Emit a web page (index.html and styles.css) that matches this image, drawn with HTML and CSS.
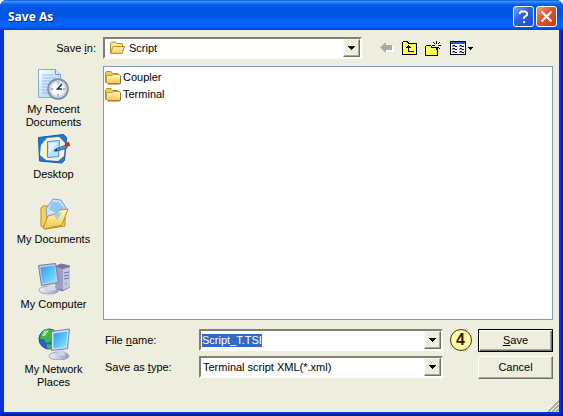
FILE: index.html
```html
<!DOCTYPE html>
<html lang="en">
<head>
<meta charset="utf-8">
<title>Save As</title>
<link rel="stylesheet" href="styles.css">
</head>
<body>
<svg class="defs" aria-hidden="true">
  <defs>
    <linearGradient id="gold" x1="0" y1="0" x2="0" y2="1"><stop offset="0" stop-color="#fffbd0"/><stop offset="1" stop-color="#f1c64c"/></linearGradient>
    <linearGradient id="paper" x1="0" y1="0" x2="1" y2="1"><stop offset="0" stop-color="#ffffff"/><stop offset="1" stop-color="#9cc8f5"/></linearGradient>
    <linearGradient id="screen" x1="0" y1="0" x2="1" y2="1"><stop offset="0" stop-color="#279cf0"/><stop offset="1" stop-color="#8beaff"/></linearGradient>
    <linearGradient id="metal" x1="0" y1="0" x2="1" y2="0"><stop offset="0" stop-color="#f4f5ff"/><stop offset="1" stop-color="#9698be"/></linearGradient>
    <symbol id="folder" viewBox="0 0 16 16">
      <path d="M.5 12.500v-10l1-1h4.500l1.500 2h5.500l1 1.500v7.500z" fill="#f0cb55" stroke="#b88a20"/>
      <path d="M1.500 5.500h6l1-1h5.500l1.500 1v7l-1 1H2.500l-1-1z" fill="url(#gold)" stroke="#c49a28"/>
      <path d="M15.500 6v7l-1 1H3" fill="none" stroke="#8c6d20"/>
    </symbol>
    <symbol id="folder-open" viewBox="0 0 16 16">
      <path d="M1.500 12.500v-9l1-1.500h4l1.500 1.500h5l.5 1V12z" fill="#ffe78a" stroke="#b98d25"/>
      <path d="M1.500 13.500 4 6.500h11.500l-2.500 7z" fill="url(#gold)" stroke="#bd8e20"/>
    </symbol>
    <symbol id="arrow" viewBox="0 0 7 4"><path d="M0 0h7v1H6v1H5v1H4v1H3V3H2V2H1V1H0z"/></symbol>
  </defs>
</svg>

<main class="dialog">
  <header class="titlebar">
    <h1>Save As</h1>
    <button class="caption-btn help" type="button" aria-label="Help">
      <svg viewBox="0 0 19 19"><path d="M6 7V6l1-1.500h4.500L13 6v2l-3 2.500V12M10 14v2" fill="none" stroke="#fff" stroke-width="2"/></svg>
    </button>
    <button class="caption-btn close" type="button" aria-label="Close">
      <svg viewBox="0 0 19 19"><path d="m4.500 4.500 10 10M14.500 4.500l-10 10" fill="none" stroke="#fff" stroke-width="2.200"/></svg>
    </button>
  </header>

  <form class="content">
    <label class="lookin-label" for="lookin">Save <u>i</u>n:</label>
    <div class="topbar">
      <div class="combo">
        <svg class="icon16" aria-hidden="true"><use href="#folder-open"/></svg>
        <select id="lookin"><option>Script</option></select>
        <span class="drop"><svg><use href="#arrow"/></svg></span>
      </div>
      <div class="tools">
        <button type="button" aria-label="Back" disabled>
          <svg width="14" height="12"><path d="M7 2v3h7v5H7v2L1 6z" fill="#fff"/><path d="M0 5.500 6 0v3h6v5H6v3z" fill="#aaa99c"/></svg>
        </button>
        <button type="button" aria-label="Up one level">
          <svg width="15" height="14" shape-rendering="crispEdges"><path d="M.5 13.500v-12l1-1h4l1 2h8v11z" fill="#ffff58" stroke="#000"/><path d="M6 4h1v1h1v1h1v1H7v3h5v1H6V7H4V6h1V5h1z"/></svg>
        </button>
        <button type="button" aria-label="Create new folder">
          <svg width="17" height="15" shape-rendering="crispEdges"><path d="M1 5h5v2h6v8H1z" fill="#ffff58"/><path d="M1 4h5v1H1zM0 5h1v9H0zM6 5h1v1h5v1H6zM12 6h1v8h-1zM0 14h13v1H0z"/><path d="M11 0h1v3h-1zM11 6h1v3h-1zM7 4h3v1H7zM13 4h3v1h-3zM8 1h1v1H8zM9 2h1v1H9zM14 1h1v1h-1zM13 2h1v1h-1zM13 6h1v1h-1zM14 7h1v1h-1zM9 6h1v1H9z"/></svg>
        </button>
        <button type="button" aria-label="View menu">
          <svg width="23" height="14" shape-rendering="crispEdges"><path d="M.5.5h15v13H.5z" fill="#fff" stroke="#000"/><path d="M1 1h14v2H1z" fill="#1763bd"/><path d="M2 4h3v2H2zM9 4h3v2H9zM2 7h3v2H2zM9 7h3v2H9zM2 10h3v2H2zM9 10h3v2H9z" fill="#9898bd"/><path d="M3 4h2v1H3zM10 4h2v1h-2zM3 7h2v1H3zM10 7h2v1h-2zM3 10h2v1H3zM10 10h2v1h-2z" fill="#00007c"/><path d="M5 5h2v1H5zM12 5h2v1h-2zM5 8h2v1H5zM12 8h2v1h-2zM5 11h2v1H5zM12 11h2v1h-2zM18 6h5v1h-1v1h-1v1h-1V8h-1V7h-1z"/></svg>
        </button>
      </div>
    </div>

    <nav class="places">
      <a href="#recent">
        <svg viewBox="0 0 32 32" aria-hidden="true"><path d="M.5 1.500h17l5 5v23H.5z" fill="url(#paper)" stroke="#86a9df"/><path d="M17.500 1.500v5h5" fill="#d7eaff" stroke="#7098d3"/><path d="M4 7h11M4 10h14M4 13h10M4 16h7M4 19h6M4 22h6M4 25h7" stroke="#8fbcf3"/><circle cx="20" cy="21" r="9.800" fill="#e3edf7" stroke="#8190a4" stroke-width="2"/><circle cx="20" cy="21" r="7.600" fill="#f5faff" stroke="#b0cdea"/><path d="M20 14v2M20 26v2M13 21h2M25 21h2" stroke="#ef9342" stroke-width="1.500"/><path d="m24 16-4.500 5H24" fill="none" stroke="#18365b" stroke-width="1.500"/></svg>
        My Recent<br>Documents
      </a>
      <a href="#desktop">
        <svg viewBox="0 0 32 32" aria-hidden="true"><path d="m.5 4.500 25-3 3 3-2 23-3 2.500-22-2z" fill="#2b78d0" stroke="#1456a9" stroke-linejoin="round"/><path d="m3 12 6-7 12-1 6 6-1 13-6 5-12-1-6-5z" fill="#fff2c9"/><path d="m9.500 8.500 12-1-1 16-11 1z" fill="#b9e2ff" stroke="#3896e4"/><path d="m11 10 8 0-8 11z" fill="#e3f5ff"/><path d="m18 16 10-4 1 3-10 3-3 0z" fill="#4c9ee5" stroke="#315b8e"/><path d="m27 10 4-1 1 4-4 1z" fill="#c52b19"/><path d="m16 17 3-1v2z" fill="#052445"/></svg>
        Desktop
      </a>
      <a href="#documents">
        <svg viewBox="0 0 32 32" aria-hidden="true"><path d="M3 28V10l2-2h5l2 3 15 2v15l-20 3z" fill="#f8d15c" stroke="#bd8a1b"/><path d="m8 11 7-10 8 1 5 8-9 16-10-5z" fill="#c6e3ff" stroke="#6c9ed5"/><path d="m14 4 7 0 5 6-5 7-10-6z" fill="#92c6f7"/><path d="m5 30 5-12 7-2 5-4 8-1-6 16-17 4z" fill="url(#gold)" stroke="#c38d18" stroke-linejoin="round"/><path d="m16 16 8-2-5 8z" fill="#8fd2f1"/></svg>
        My Documents
      </a>
      <a href="#computer">
        <svg viewBox="0 0 32 32" aria-hidden="true"><path d="m18 3 5-2 9 2v21l-8 4-6-3z" fill="#7476a3" stroke="#777799"/><path d="m18 4 7 2v21l-7-3z" fill="#9a9fc8"/><path d="m25 6 7-2v20l-7 3z" fill="#c4c6e2"/><path d="m26 10 5-1m-5 4 5-1m-5 4 5-1" stroke="#7678a0"/><path d="m27 20 2-.5v2l-2 .5z" fill="#65d47d"/><ellipse cx="11" cy="27" rx="10" ry="4" fill="url(#metal)" stroke="#a1a2c2"/><path d="m9 20 7 1 2 6-8 1z" fill="#d8d9ed"/><path d="m.5 2.500 17-2 3 19-17 3z" fill="#c6c8dc" stroke="#7779a2"/><path d="m2.500 4.500 14-2 2 15-14 3z" fill="url(#screen)"/></svg>
        My Computer
      </a>
      <a href="#network">
        <svg viewBox="0 0 32 32" aria-hidden="true"><circle cx="11" cy="11" r="10" fill="#1e66c7" stroke="#184b9c"/><path d="M3 5 8 1l7 1 2 4-3 2-2 6-4 1-2-4-4 0zM9 16l5 1-2 4-3-1z" fill="#42b64c"/><path d="m6 3 5-1-4 6-3 0z" fill="#a4e591"/><ellipse cx="21" cy="28" rx="10" ry="4" fill="url(#metal)" stroke="#9fa1bf"/><path d="m20 20 6 0 1 8-8-1z" fill="#cfd1e6"/><path d="m13.500 3.500 18-2.500-2 19.500-16 2z" fill="#d1dcea" stroke="#7284aa"/><path d="m15.500 5.500 14-2-1.500 15-12.500 2z" fill="url(#screen)"/></svg>
        My Network<br>Places
      </a>
    </nav>

    <section class="main">
      <ul class="files">
        <li><svg class="icon16" aria-hidden="true"><use href="#folder"/></svg>Coupler</li>
        <li><svg class="icon16" aria-hidden="true"><use href="#folder"/></svg>Terminal</li>
      </ul>
      <div class="fields">
        <label for="filename">File <u>n</u>ame:</label>
        <div class="combo">
          <input id="filename" type="text" value="Script_T.TSI" spellcheck="false" autocomplete="off">
          <span class="drop"><svg><use href="#arrow"/></svg></span>
        </div>
        <span class="step">4</span>
        <button class="btn default" type="submit"><span><u>S</u>ave</span></button>
        <label for="filetype">Save as <u>t</u>ype:</label>
        <div class="combo">
          <select id="filetype"><option>Terminal script XML(*.xml)</option></select>
          <span class="drop"><svg><use href="#arrow"/></svg></span>
        </div>
        <button class="btn cancel" type="button">Cancel</button>
      </div>
    </section>
    <svg class="grip" aria-hidden="true"><path d="m1 12 11-11M5 12l7-7M9 12l3-3" stroke="#aaa99b" stroke-width="2"/><path d="m0 11 11-11M4 11l8-8M8 11l4-4" stroke="#fff"/></svg>
  </form>
</main>
<script src="script.js"></script>
</body>
</html>
```

FILE: styles.css
```css
* { box-sizing: border-box; }

body {
  margin: 0;
  background: #f4f4ea;
  font: 11px/13px "Liberation Sans", Arial, sans-serif;
  color: #000;
}

.defs { position: absolute; width: 0; height: 0; }

button, input, select { font: inherit; color: inherit; }

.dialog {
  display: flex;
  flex-direction: column;
  min-height: 100vh;
  border-radius: 7px 7px 0 0;
  background: #0831d9;
  box-shadow: inset 1px 0 #0831d9, inset -2px 0 #001ea0, inset 0 -2px #001ea0;
  overflow: hidden;
}

.titlebar {
  display: flex;
  align-items: center;
  gap: 2px;
  height: 30px;
  padding: 3px 6px 0 8px;
  background: linear-gradient(#0058e0 0, #3b92ff 5%, #0862e8 14%, #0054e3 28%, #0055e5 55%, #0065ff 78%, #0062f8 90%, #0041c6 100%);
}

.titlebar h1 {
  flex: 1;
  margin: 0;
  font: bold 12px/16px "Noto Sans", sans-serif;
  color: #fff;
  text-shadow: 1px 1px #0a1e80;
}

.caption-btn {
  width: 21px;
  height: 21px;
  padding: 0;
  border: 1px solid #fff;
  border-radius: 3px;
}
.caption-btn svg { display: block; width: 19px; height: 19px; }
.help { background: linear-gradient(135deg, #7ea3f5, #2b5fe0 45%, #1c4fd0); }
.close { background: linear-gradient(135deg, #f0a080, #e0522c 45%, #c63a12); }

.content {
  position: relative;
  flex: 1;
  display: grid;
  grid-template-columns: 99px 1fr;
  grid-template-rows: 36px 1fr;
  margin: 0 4px 4px;
  padding-right: 6px;
  background: #eeeedf;
}

.lookin-label { justify-self: end; padding: 12px 7px 0 0; }

.topbar {
  display: flex;
  align-items: flex-start;
  gap: 18px;
  padding-top: 7px;
}
.topbar .combo { flex: 1; padding-left: 4px; }
.tools {
  flex: 0 0 173px;
  display: flex;
  align-items: center;
  gap: 8px;
  height: 22px;
}
.tools button { display: block; padding: 0; border: 0; background: none; }
.tools svg { display: block; }

.combo {
  display: flex;
  align-items: center;
  height: 22px;
  border: 2px solid;
  border-color: #808074 #fff #fff #808074;
  background: #fff;
  min-width: 0;
}
.combo select, .combo input {
  appearance: none;
  flex: 1;
  min-width: 0;
  height: 13px;
  margin: 0;
  padding: 0 2px;
  border: 0;
  outline: 0;
  background: none;
}
.combo input { padding: 0 1px; }
.topbar select { padding-left: 4px; }
.combo input::selection { background: #316ac5; color: #fff; }

.drop {
  display: grid;
  place-items: center;
  width: 17px;
  height: 18px;
  border: 1px solid;
  border-color: #f8f8f0 #716f64 #716f64 #f8f8f0;
  box-shadow: inset -1px -1px #aca899;
  background: #eeeedf;
  pointer-events: none;
}
.drop svg { width: 7px; height: 4px; }

.icon16 { flex: none; width: 16px; height: 16px; }

.places {
  display: grid;
  grid-auto-rows: 65px;
  align-content: start;
  padding-top: 2px;
}
.places a {
  display: block;
  text-align: center;
  color: inherit;
  text-decoration: none;
}
.places svg { display: block; width: 32px; height: 32px; margin: 0 auto 3px; }

.main { display: flex; flex-direction: column; }

.files {
  flex: 1;
  margin: 0;
  padding: 2px 1px;
  border: 1px solid #7f9db9;
  background: #fff;
  list-style: none;
}
.files li { display: flex; align-items: center; gap: 2px; height: 17px; }

.fields {
  display: grid;
  grid-template-columns: 94px 1fr 31px 75px;
  grid-template-rows: 22px 22px;
  row-gap: 5px;
  column-gap: 2px;
  align-items: center;
  padding: 9px 0 34px;
}
.fields label { padding-left: 2px; }

.step {
  justify-self: center;
  width: 22px;
  height: 22px;
  border: 1px solid #4a2b20;
  border-radius: 50%;
  background: #ffffa0;
  font: bold 16px/20px "Liberation Sans", Arial, sans-serif;
  color: #3a1410;
  text-align: center;
}

.btn {
  height: 23px;
  padding: 0;
  border: 1px solid;
  border-color: #fff #716f64 #716f64 #fff;
  box-shadow: inset -1px -1px #aca899;
  background: #eeeedf;
}
.default { border-color: #000; box-shadow: inset 1px 1px #fff, inset -1px -1px #716f64, inset -2px -2px #aca899; }
.cancel { grid-column: 4; }

.grip { position: absolute; right: 0; bottom: 0; width: 12px; height: 12px; }
```

FILE: script.js
```js
const filename = document.getElementById("filename");
filename.focus();
filename.select();
```
